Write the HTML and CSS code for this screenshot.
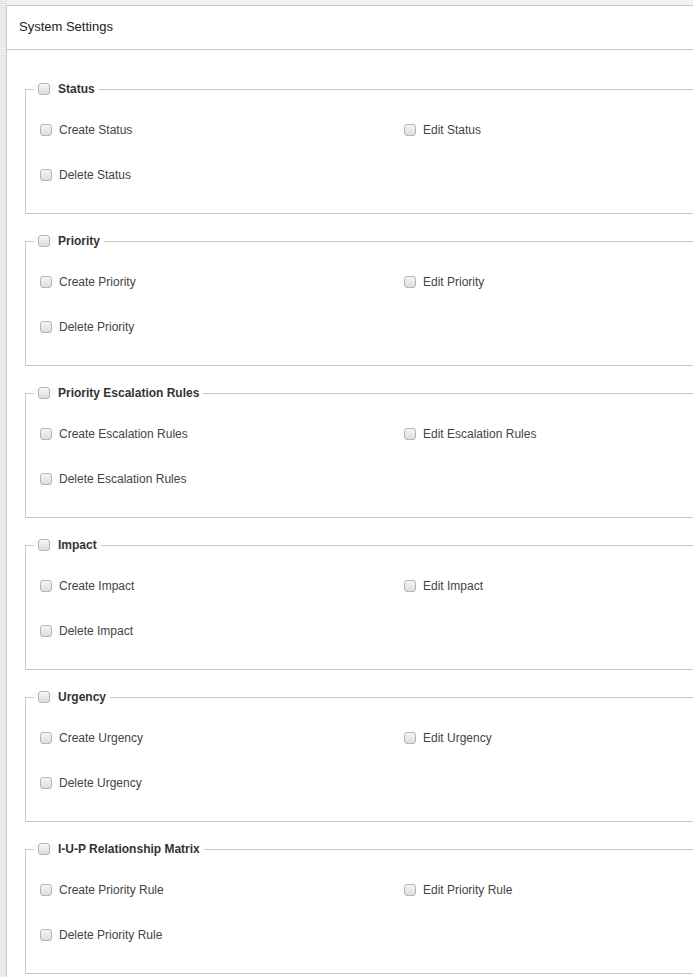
FILE: index.html
```html
<!DOCTYPE html>
<html lang="en">
<head>
  <meta charset="UTF-8">
  <title>System Settings</title>
  <link rel="stylesheet" href="styles.css">
</head>
<body>
  <div class="panel">
    <div class="panel-heading">System Settings</div>

    <div class="panel-body">
      <!-- Status -->
      <fieldset>
        <legend><label><input type="checkbox"> Status</label></legend>
        <div class="perm-grid">
          <label class="perm"><input type="checkbox"> Create Status</label>
          <label class="perm"><input type="checkbox"> Edit Status</label>
          <label class="perm"><input type="checkbox"> Delete Status</label>
        </div>
      </fieldset>

      <!-- Priority -->
      <fieldset>
        <legend><label><input type="checkbox"> Priority</label></legend>
        <div class="perm-grid">
          <label class="perm"><input type="checkbox"> Create Priority</label>
          <label class="perm"><input type="checkbox"> Edit Priority</label>
          <label class="perm"><input type="checkbox"> Delete Priority</label>
        </div>
      </fieldset>

      <!-- Priority Escalation Rules -->
      <fieldset>
        <legend><label><input type="checkbox"> Priority Escalation Rules</label></legend>
        <div class="perm-grid">
          <label class="perm"><input type="checkbox"> Create Escalation Rules</label>
          <label class="perm"><input type="checkbox"> Edit Escalation Rules</label>
          <label class="perm"><input type="checkbox"> Delete Escalation Rules</label>
        </div>
      </fieldset>

      <!-- Impact -->
      <fieldset>
        <legend><label><input type="checkbox"> Impact</label></legend>
        <div class="perm-grid">
          <label class="perm"><input type="checkbox"> Create Impact</label>
          <label class="perm"><input type="checkbox"> Edit Impact</label>
          <label class="perm"><input type="checkbox"> Delete Impact</label>
        </div>
      </fieldset>

      <!-- Urgency -->
      <fieldset>
        <legend><label><input type="checkbox"> Urgency</label></legend>
        <div class="perm-grid">
          <label class="perm"><input type="checkbox"> Create Urgency</label>
          <label class="perm"><input type="checkbox"> Edit Urgency</label>
          <label class="perm"><input type="checkbox"> Delete Urgency</label>
        </div>
      </fieldset>

      <!-- I-U-P Relationship Matrix -->
      <fieldset>
        <legend><label><input type="checkbox"> I-U-P Relationship Matrix</label></legend>
        <div class="perm-grid">
          <label class="perm"><input type="checkbox"> Create Priority Rule</label>
          <label class="perm"><input type="checkbox"> Edit Priority Rule</label>
          <label class="perm"><input type="checkbox"> Delete Priority Rule</label>
        </div>
      </fieldset>
    </div>
  </div>
</body>
</html>
```

FILE: styles.css
```css
html, body {
  margin: 0;
  height: 100%;
  overflow: hidden;
}
body {
  font-family: Arial, "Liberation Sans", sans-serif;
  font-size: 12px;
  color: #444;
  background-color: #e8e8e8;
  background-image: repeating-linear-gradient(0deg, #f0f0f0 0 1px, #e4e4e4 1px 2px);
  padding-top: 5px;
  box-sizing: border-box;
}
body::before {
  content: "";
  position: absolute;
  top: 0;
  left: 7px;
  right: 0;
  height: 5px;
  background: #f2f2f2;
}
.panel {
  margin-left: 6px;
  min-height: 100%;
  background: white;
  border-left: 1px solid #c8c8c8;
  border-top: 1px solid #c8c8c8;
}
.panel-heading {
  height: 43px;
  line-height: 41px;
  padding-left: 12px;
  font-size: 13px;
  color: #222;
  border-bottom: 1px solid #c8c8c8;
}
.panel-body {
  padding: 31px 0 0 18px;
}
fieldset {
  margin: 0 0 19px 0;
  padding: 23px 0 28px 8px;
  border: 1px solid #c8c8c8;
  border-right: none;
}
legend {
  padding: 0 4px;
  line-height: 16px;
  font-weight: bold;
  color: #333;
}
legend label {
  display: flex;
  align-items: center;
  gap: 8px;
}
.perm-grid {
  display: grid;
  grid-template-columns: 364px 1fr;
  row-gap: 25px;
  padding-left: 6px;
}
.perm {
  display: flex;
  align-items: center;
  gap: 7px;
  height: 20px;
}
input[type="checkbox"] {
  appearance: none;
  -webkit-appearance: none;
  margin: 0;
  width: 12px;
  height: 12px;
  border: 1px solid #b4b4b4;
  border-radius: 3px;
  background: linear-gradient(#f6f6f6, #dcdcdc);
  flex: none;
}
```
